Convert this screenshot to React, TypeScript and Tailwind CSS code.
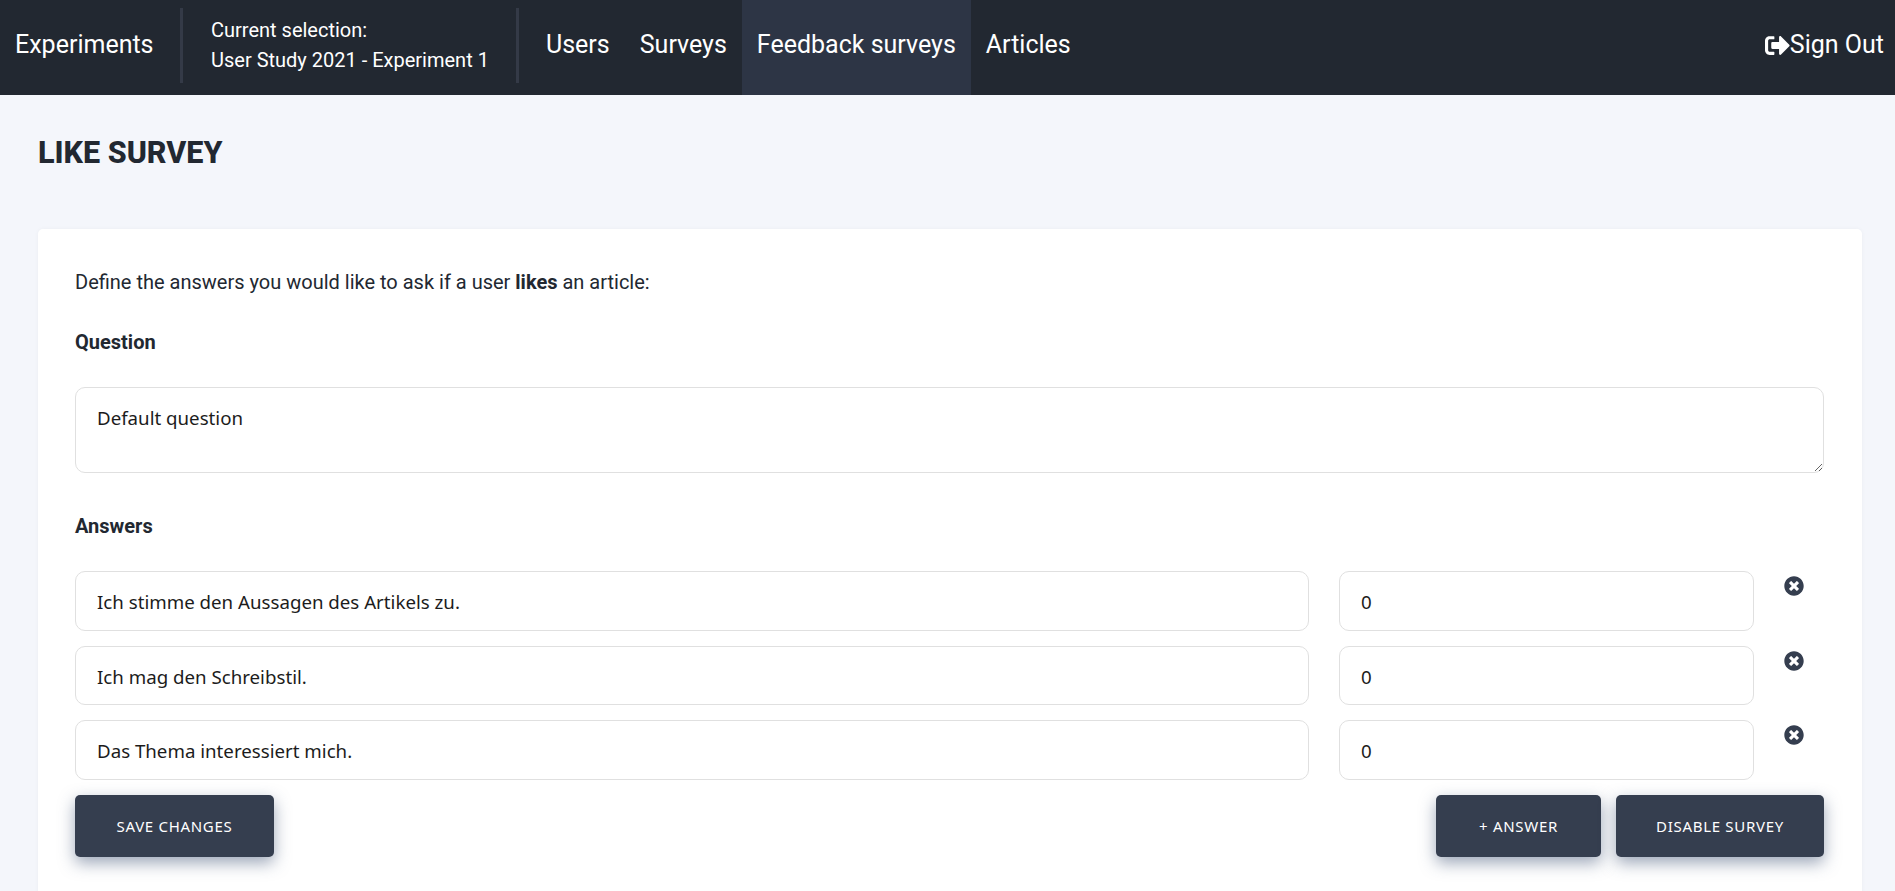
import React from "react";
import { FaSignOutAlt, FaTimesCircle } from "react-icons/fa";

const answers = [
  "Ich stimme den Aussagen des Artikels zu.",
  "Ich mag den Schreibstil.",
  "Das Thema interessiert mich.",
];

const inputCls =
  "h-[59.5px] rounded-[10px] border border-[#e0e0e0] bg-white px-[21px] pt-[2px] text-[18.7px] text-[#1c1c1c] outline-none font-['Noto_Sans',sans-serif]";
const btnCls =
  "h-[62px] rounded-[5px] bg-[#353e4f] text-[15px] tracking-[0.7px] text-white uppercase shadow-[0_6px_16px_rgba(60,80,115,0.5)] font-['Noto_Sans',sans-serif]";

export default function App() {
  return (
    <div className="h-screen overflow-hidden bg-[#f4f6fb] font-['Roboto',sans-serif] text-[#222831]">
      <nav className="flex h-[95px] items-stretch bg-[#222831] text-[25px] text-white">
        <a className="flex w-[180px] shrink-0 items-center pb-[5px] pl-[15px]">Experiments</a>
        <div className="mb-[12px] mt-[8px] w-[3px] shrink-0 bg-[#343a47]" />
        <div className="flex w-[333px] shrink-0 flex-col justify-center pb-[5px] pl-[28px] text-[20px] leading-[30px]">
          <span>Current selection:</span>
          <span>User Study 2021 - Experiment 1</span>
        </div>
        <div className="mb-[12px] mt-[8px] w-[3px] shrink-0 bg-[#343a47]" />
        <a className="flex items-center pb-[5px] pl-[27px] pr-[15px]">Users</a>
        <a className="flex items-center px-[15px] pb-[5px]">Surveys</a>
        <a className="flex items-center bg-[#2d3545] px-[15px] pb-[5px]">Feedback surveys</a>
        <a className="flex items-center px-[15px] pb-[5px]">Articles</a>
        <a className="ml-auto flex items-center pb-[5px] pr-[11px]">
          <FaSignOutAlt className="h-[25px] w-[25px]" />
          Sign Out
        </a>
      </nav>
      <main className="pl-[38px] pr-[33px]">
        <h1 className="flex h-[114px] items-center pt-[3px] text-[30.5px] font-extrabold uppercase leading-none">Like Survey</h1>
        <section className="mt-[20px] h-[700px] rounded-[5px] bg-white pl-[37px] pr-[38px] pt-[38px] shadow-[0_0_4px_rgba(0,0,0,0.04)]">
          <p className="text-[20px] leading-[30px]">
            Define the answers you would like to ask if a user <b>likes</b> an article:
          </p>
          <h2 className="mt-[30px] text-[20px] font-bold leading-[30px]">Question</h2>
          <textarea
            className="mt-[30px] block h-[86px] w-full rounded-[10px] border border-[#e0e0e0] px-[21px] pb-[12px] pt-[15px] text-[18.7px] leading-[30px] text-[#1c1c1c] outline-none font-['Noto_Sans',sans-serif]"
            defaultValue="Default question"
          />
          <h2 className="mt-[38px] text-[20px] font-bold leading-[30px]">Answers</h2>
          <div className="mt-[30px] flex flex-col gap-[15px]">
            {answers.map((a) => (
              <div key={a} className="flex items-start">
                <input className={inputCls + " w-[1234px]"} defaultValue={a} />
                <input className={inputCls + " ml-[30px] w-[415px]"} defaultValue="0" />
                <FaTimesCircle className="ml-[30px] mt-[5px] h-[20px] w-[20px] text-[#353e4f]" />
              </div>
            ))}
          </div>
          <div className="mt-[15.5px] flex justify-between">
            <button className={btnCls + " w-[199px]"}>Save changes</button>
            <div className="flex gap-[15px]">
              <button className={btnCls + " w-[165px]"}>+ Answer</button>
              <button className={btnCls + " w-[208px]"}>Disable survey</button>
            </div>
          </div>
        </section>
      </main>
    </div>
  );
}
